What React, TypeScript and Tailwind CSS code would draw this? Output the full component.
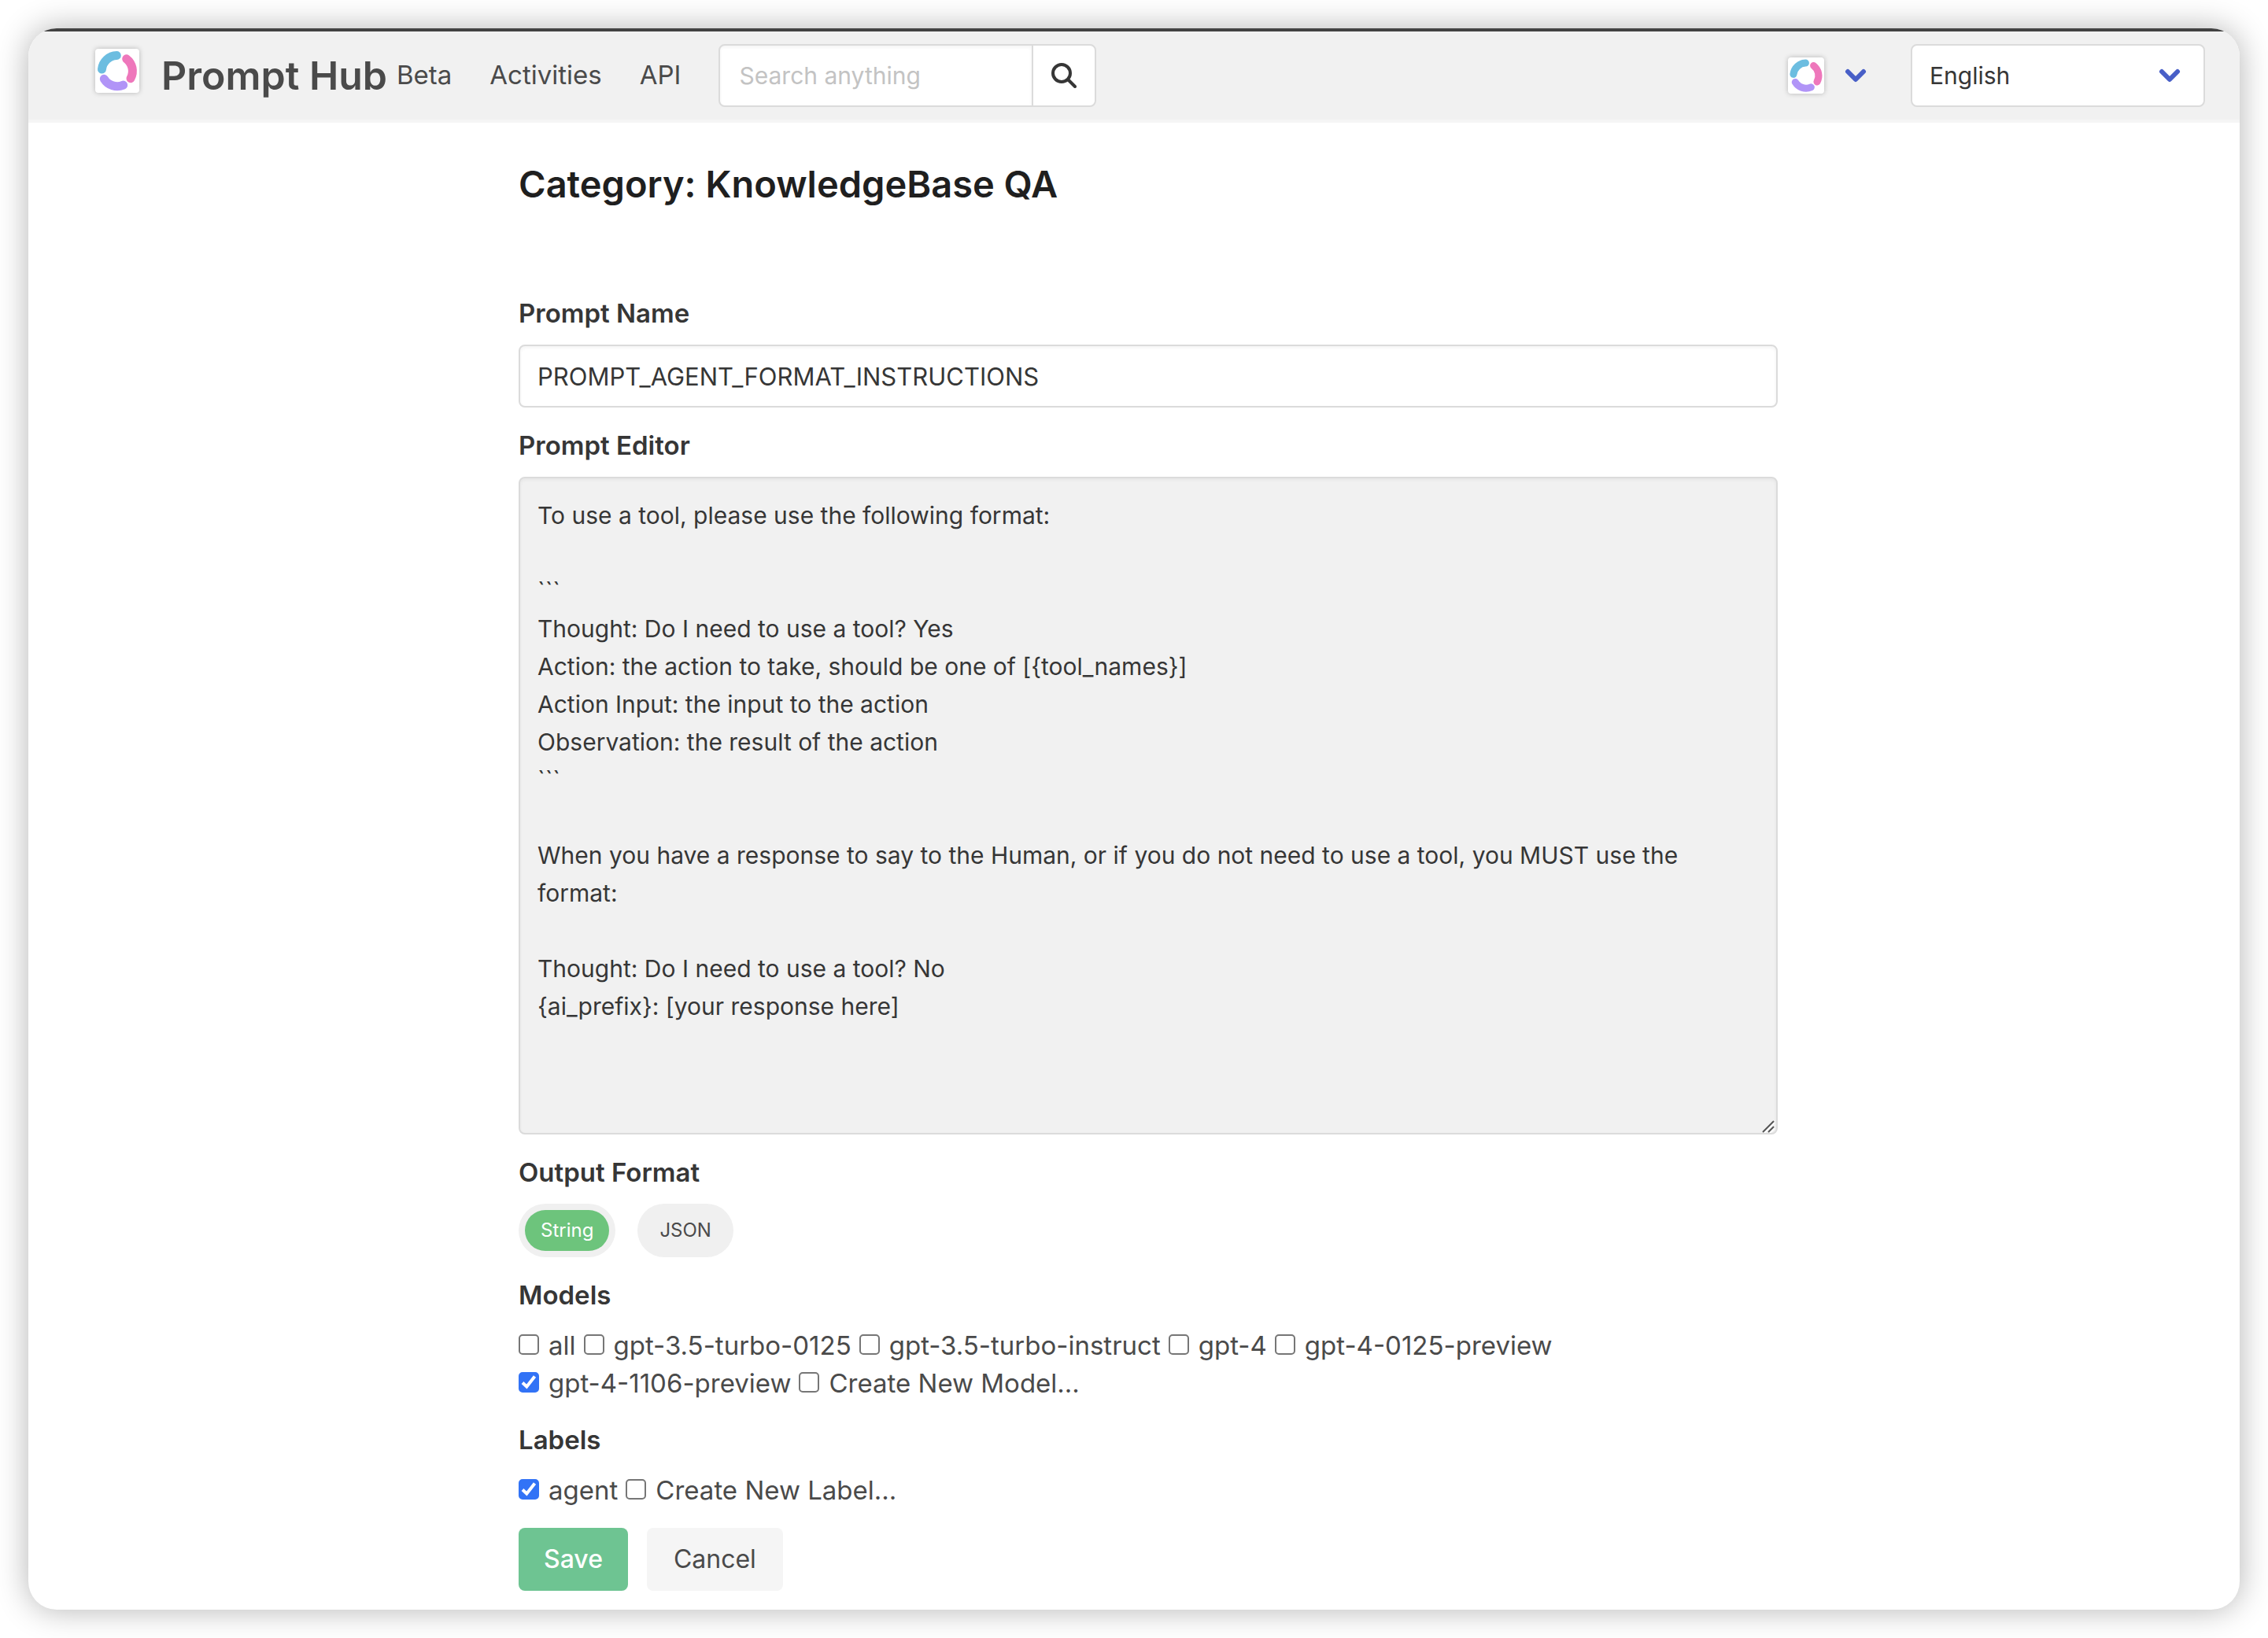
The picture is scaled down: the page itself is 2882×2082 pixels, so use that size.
import { useId, useState } from 'react';
import clsx from 'clsx';

const PROMPT_TEXT = [
  'To use a tool, please use the following format:',
  '',
  '```',
  'Thought: Do I need to use a tool? Yes',
  'Action: the action to take, should be one of [{tool_names}]',
  'Action Input: the input to the action',
  'Observation: the result of the action',
  '```',
  '',
  'When you have a response to say to the Human, or if you do not need to use a tool, you MUST use the format:',
  '',
  'Thought: Do I need to use a tool? No',
  '{ai_prefix}: [your response here]',
].join('\n');

const MODELS = [
  { name: 'all', checked: false },
  { name: 'gpt-3.5-turbo-0125', checked: false },
  { name: 'gpt-3.5-turbo-instruct', checked: false },
  { name: 'gpt-4', checked: false },
  { name: 'gpt-4-0125-preview', checked: false },
  { name: 'gpt-4-1106-preview', checked: true },
  { name: 'Create New Model...', checked: false },
];

const LABELS = [
  { name: 'agent', checked: true },
  { name: 'Create New Label...', checked: false },
];

function Logo({ className }: { className?: string }) {
  return (
    <span className={clsx('block shrink-0 rounded bg-white shadow-[0_0_6px_rgba(0,0,0,0.25)]', className)}>
      <svg viewBox="0 0 56 56" className="size-full" fill="none" strokeWidth="11" strokeLinecap="round" aria-hidden="true">
        <path d="M8.5 26A19.5 19.5 0 0 1 27.3 8.6" stroke="#6cbde0" />
        <path d="M39.7 12.8A19.5 19.5 0 0 1 45 37.7" stroke="#ee77bb" />
        <path d="M11.3 38.3A19.5 19.5 0 0 0 35.7 46.1" stroke="#b194f7" />
      </svg>
    </span>
  );
}

function Chevron({ className }: { className?: string }) {
  return (
    <svg viewBox="0 0 28 20" className={clsx('h-5 w-7', className)} fill="none" stroke="#485fc7" strokeWidth="6" strokeLinecap="round" strokeLinejoin="round" aria-hidden="true">
      <path d="M4 5L14 15L24 5" />
    </svg>
  );
}

function CheckItem({ name, initial }: { name: string; initial: boolean }) {
  const [checked, setChecked] = useState(initial);
  return (
    <label className="inline-flex items-baseline gap-3 leading-[48px]">
      <span className="relative inline-block size-[26px] shrink-0 leading-none">
        <input
          type="checkbox"
          checked={checked}
          onChange={(e) => setChecked(e.target.checked)}
          className="block size-[26px] appearance-none rounded-[5px] border-2 border-[#767676] bg-white checked:border-[#3273f6] checked:bg-[#3273f6]"
        />
        {checked && (
          <svg viewBox="0 0 26 26" className="pointer-events-none absolute inset-0 size-[26px]" fill="none" stroke="#fff" strokeWidth="4" aria-hidden="true">
            <path d="M5 13.5L10.3 18.5L20.5 5.5" />
          </svg>
        )}
      </span>
      {name}
    </label>
  );
}

function CheckGroup({ title, items }: { title: string; items: { name: string; checked: boolean }[] }) {
  return (
    <fieldset className="min-w-0">
      <legend className="mb-4 font-semibold leading-[48px] text-[#363636]">{title}</legend>
      <div className="flex flex-wrap gap-x-2.5">
        {items.map((item) => (
          <CheckItem key={item.name} name={item.name} initial={item.checked} />
        ))}
      </div>
    </fieldset>
  );
}

export default function App() {
  const id = useId();
  const [format, setFormat] = useState('String');
  const [name, setName] = useState('PROMPT_AGENT_FORMAT_INSTRUCTIONS');
  const [prompt, setPrompt] = useState(PROMPT_TEXT);

  return (
    <div className="bg-white p-9 font-['Inter',sans-serif] text-[33px] text-[#4a4a4a]">
      <div className="overflow-hidden rounded-[36px] bg-white shadow-[0_0_40px_rgba(0,0,0,0.3)]">
        <div className="h-1 bg-[#424242]" />
        <header className="flex items-center justify-between border-b-4 border-[#f5f5f5] bg-[#f1f1f1] py-4 pl-[85px] pr-11">
          <nav className="flex items-center gap-12">
            <div className="flex items-center gap-3">
              <a href="#home" className="flex h-20 items-center gap-7">
                <Logo className="mt-1.5 size-14 self-start" />
                <span className="text-[50px] font-semibold leading-none">Prompt Hub</span>
              </a>
              <span>Beta</span>
            </div>
            <a href="#activities">Activities</a>
            <a href="#api">API</a>
            <form role="search" className="flex h-20 w-[480px] overflow-hidden rounded-lg border-2 border-[#dbdbdb] bg-white" onSubmit={(e) => e.preventDefault()}>
              <input
                type="search"
                aria-label="Search anything"
                placeholder="Search anything"
                className="min-w-0 flex-1 px-6 text-[30px] text-[#363636] shadow-[inset_0_2px_4px_rgba(10,10,10,0.05)] outline-none placeholder:text-[#c3c3c3]"
              />
              <button type="submit" aria-label="Search" className="flex w-20 items-center justify-center border-l-2 border-[#dbdbdb]">
                <svg viewBox="0 0 32 32" className="size-8" fill="none" stroke="#363636" strokeLinecap="round" aria-hidden="true">
                  <circle cx="13" cy="13" r="11" strokeWidth="4" />
                  <path d="M21.5 21.5L30 30" strokeWidth="4" />
                </svg>
              </button>
            </form>
          </nav>
          <div className="flex items-center gap-14">
            <button type="button" aria-label="Account menu" className="flex items-center gap-[26px]">
              <Logo className="size-[46px]" />
              <Chevron />
            </button>
            <div className="relative">
              <select aria-label="Language" className="h-20 w-[374px] appearance-none rounded-lg border-2 border-[#dbdbdb] bg-white px-[22px] text-[30px] text-[#363636]">
                <option>English</option>
              </select>
              <Chevron className="pointer-events-none absolute inset-y-0 right-[31px] my-auto" />
            </div>
          </div>
        </header>

        <main className="pb-6 pl-9 pt-12">
          <div className="mx-auto max-w-[1600px]">
            <h1 className="mb-[110px] text-[47px] font-semibold leading-[60px] text-[#1f1f1f]">Category: KnowledgeBase QA</h1>
            <form className="flex flex-col gap-6" onSubmit={(e) => e.preventDefault()}>
              <div>
                <label htmlFor={id + 'name'} className="mb-4 block font-semibold leading-[48px] text-[#363636]">
                  Prompt Name
                </label>
                <input
                  id={id + 'name'}
                  type="text"
                  value={name}
                  onChange={(e) => setName(e.target.value)}
                  className="block h-20 w-full rounded-lg border-2 border-[#dbdbdb] bg-white px-[22px] text-[31px] text-[#363636] shadow-[inset_0_2px_4px_rgba(10,10,10,0.05)]"
                />
              </div>

              <div>
                <label htmlFor={id + 'prompt'} className="mb-4 block font-semibold leading-[48px] text-[#363636]">
                  Prompt Editor
                </label>
                <div className="relative">
                  <textarea
                    id={id + 'prompt'}
                    value={prompt}
                    onChange={(e) => setPrompt(e.target.value)}
                    className="block h-[836px] w-full resize-none rounded-lg border-2 border-[#dbdbdb] bg-[#f1f1f1] px-[22px] py-[23px] text-[30px] leading-[48px] text-[#363636] shadow-[inset_0_2px_4px_rgba(10,10,10,0.05)]"
                  />
                  <svg viewBox="0 0 16 16" className="pointer-events-none absolute bottom-0.5 right-1 size-4" fill="none" strokeWidth="2" aria-hidden="true">
                    <path d="M3 16L16 3M10 16L16 10" stroke="#fff" />
                    <path d="M1 15L15 1M8 15L15 8" stroke="#555" />
                  </svg>
                </div>
              </div>

              <fieldset>
                <legend className="mb-4 font-semibold leading-[48px] text-[#363636]">Output Format</legend>
                <div className="flex gap-7 text-2xl">
                  {['String', 'JSON'].map((option) => (
                    <label key={option} className="block h-[68px] rounded-full bg-[#f0f0f0] p-2">
                      <input type="radio" name="format" className="sr-only" checked={format === option} onChange={() => setFormat(option)} />
                      <span className={clsx('flex h-[52px] items-center rounded-full px-5', format === option && 'bg-[#6dc47c] text-white')}>{option}</span>
                    </label>
                  ))}
                </div>
              </fieldset>

              <CheckGroup title="Models" items={MODELS} />
              <CheckGroup title="Labels" items={LABELS} />

              <div className="flex gap-6 text-[32px]">
                <button type="submit" className="h-20 rounded-lg bg-[#6ec492] px-8 font-medium text-white">
                  Save
                </button>
                <button type="button" className="h-20 rounded-lg bg-[#f5f5f5] px-[34px]">
                  Cancel
                </button>
              </div>
            </form>
          </div>
        </main>
      </div>
    </div>
  );
}
